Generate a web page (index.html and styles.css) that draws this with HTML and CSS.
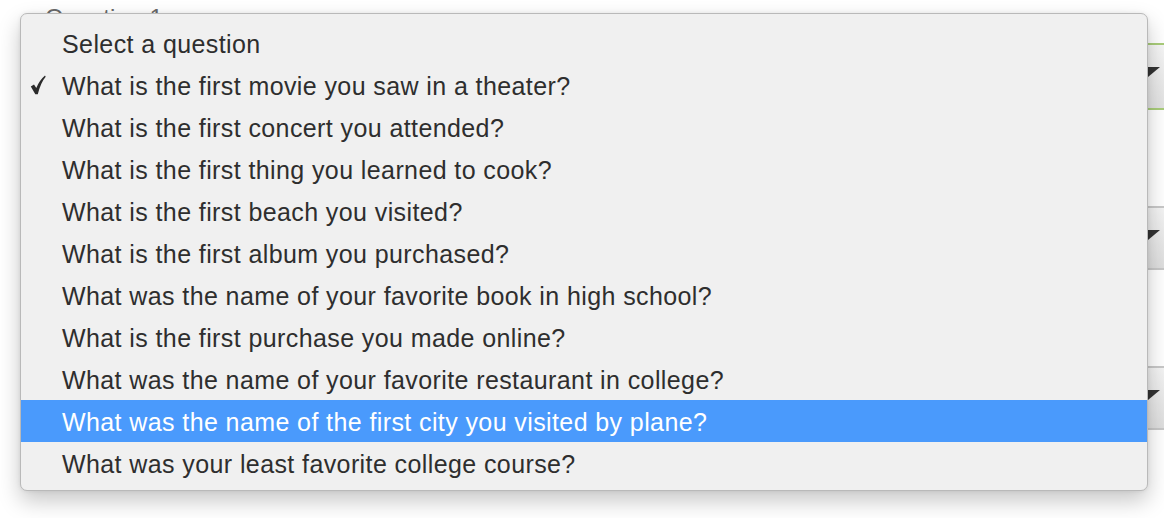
FILE: index.html
```html
<!DOCTYPE html>
<html>
<head>
<meta charset="utf-8">
<link rel="stylesheet" href="styles.css">
</head>
<body>
<div class="page">
  <div class="field first">
    <div class="label">Question 1</div>
    <div class="select focused"><span class="arrow"></span></div>
  </div>
  <div class="field">
    <div class="select"><span class="arrow"></span></div>
  </div>
  <div class="field">
    <div class="select"><span class="arrow"></span></div>
  </div>
</div>
<div class="menu">
  <div class="item">Select a question</div>
  <div class="item checked"><svg class="check" viewBox="0 0 16 20" width="16" height="20"><path d="M0.8 11.6 L4 9.4 L6.3 13 Q9.5 5.3 15 0.6 L15.7 1.8 Q10.9 7.3 7.8 19.2 L5.3 19.2 Z" fill="#2b2b2b"/></svg>What is the first movie you saw in a theater?</div>
  <div class="item">What is the first concert you attended?</div>
  <div class="item">What is the first thing you learned to cook?</div>
  <div class="item">What is the first beach you visited?</div>
  <div class="item">What is the first album you purchased?</div>
  <div class="item">What was the name of your favorite book in high school?</div>
  <div class="item">What is the first purchase you made online?</div>
  <div class="item">What was the name of your favorite restaurant in college?</div>
  <div class="item active">What was the name of the first city you visited by plane?</div>
  <div class="item">What was your least favorite college course?</div>
</div>
</body>
</html>
```
FILE: styles.css
```css
html, body {
  margin: 0;
  padding: 0;
  background: #ffffff;
  width: 1164px;
  height: 518px;
  overflow: hidden;
  font-family: "Liberation Sans", Arial, Helvetica, sans-serif;
}
.page {
  padding-left: 45px;
  display: flex;
  flex-direction: column;
}
.field {
  display: flex;
  flex-direction: column;
}
.field.first {
  margin-top: 6px;
}
.field + .field {
  margin-top: 96px;
}
.label {
  color: #6a6a6a;
  font-size: 24px;
  line-height: 24px;
  margin-bottom: 13px;
  letter-spacing: 0.2px;
}
.select {
  position: relative;
  width: 1140px;
  height: 64px;
  box-sizing: border-box;
  border-top: 2px solid #c8c8c8;
  border-bottom: 2px solid #c8c8c8;
  background: linear-gradient(#f4f4f4, #dedede);
}
.select.focused {
  border-color: #a9cd7a;
  height: 67px;
  background: linear-gradient(#f6f6f6, #e2e2e2);
}
.arrow {
  position: absolute;
  left: 1091px;
  top: 22px;
  width: 0;
  height: 0;
  border-left: 12px solid transparent;
  border-right: 12px solid transparent;
  border-top: 10px solid #333;
}
.menu {
  position: absolute;
  left: 20px;
  top: 13px;
  width: 1128px;
  height: 478px;
  box-sizing: border-box;
  background: #f0f0f0;
  border: 1px solid #b9b9b9;
  border-radius: 7px;
  padding: 8px 0 6px;
  box-shadow: 0 10px 22px rgba(0,0,0,0.22), 0 0 4px rgba(0,0,0,0.08);
  display: flex;
  flex-direction: column;
}
.item {
  position: relative;
  box-sizing: border-box;
  height: 42px;
  padding-top: 3px;
  line-height: 39px;
  padding-left: 41px;
  font-size: 25px;
  letter-spacing: 0.4px;
  color: #2e2e2e;
  white-space: nowrap;
}
.item.active {
  background: #4a9afc;
  color: #ffffff;
}
.check {
  position: absolute;
  left: 9px;
  top: 11px;
}
```
